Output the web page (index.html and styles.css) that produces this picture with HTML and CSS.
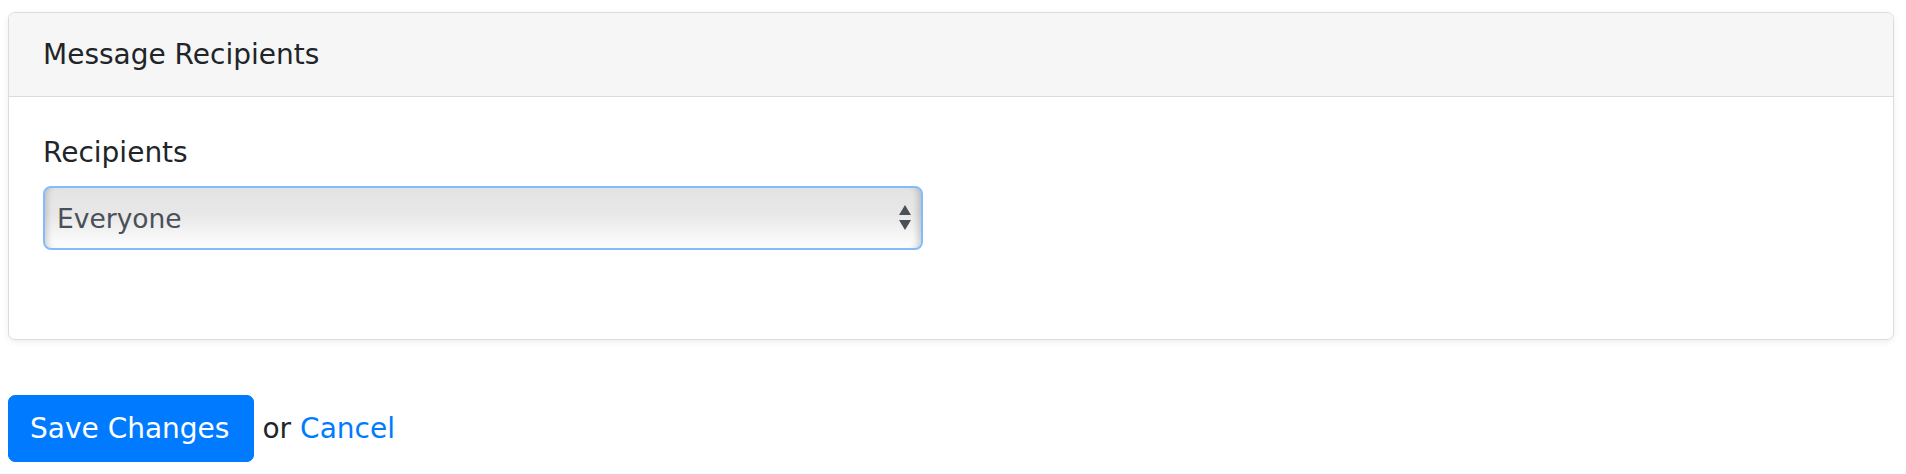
FILE: index.html
```html
<!DOCTYPE html>
<html lang="en">
<head>
<meta charset="utf-8">
<title>Message Recipients</title>
<link rel="stylesheet" href="styles.css">
</head>
<body>
<div class="page">
  <div class="card">
    <div class="card-header">Message Recipients</div>
    <div class="card-body">
      <div class="form-group">
        <label class="form-label" for="recipients">Recipients</label>
        <div class="select-wrap">
          <select id="recipients" class="form-select">
            <option>Everyone</option>
          </select>
          <svg class="select-arrows" width="14" height="28" viewBox="0 0 14 28" aria-hidden="true">
            <path d="M7 1 L13 11 L1 11 Z" fill="#4b5058"/>
            <path d="M1 16 L13 16 L7 26 Z" fill="#4b5058"/>
          </svg>
        </div>
      </div>
    </div>
  </div>
  <div class="actions">
    <button class="btn-primary" type="button">Save Changes</button>
    <span class="or">or</span>
    <a class="cancel" href="#">Cancel</a>
  </div>
</div>
</body>
</html>
```

FILE: styles.css
```css
html, body {
  margin: 0;
  padding: 0;
  background: #ffffff;
}

body {
  font-family: "DejaVu Sans", "Noto Sans", sans-serif;
  font-size: 28px;
  color: #212529;
}

.page {
  padding: 12px 12px 0 8px;
}

.card {
  width: 1886px;
  box-sizing: border-box;
  border: 1px solid #dcdcdc;
  border-radius: 7px;
  background: #ffffff;
  box-shadow: 0 2px 6px rgba(0, 0, 0, 0.07);
}

.card-header {
  height: 83px;
  display: flex;
  align-items: center;
  padding: 0 34px;
  background: #f6f6f6;
  border-bottom: 1px solid #dcdcdc;
  border-radius: 6px 6px 0 0;
  line-height: 1;
}

.card-body {
  padding: 35px 34px 61px;
}

.form-group {
  margin-bottom: 28px;
}

.form-label {
  display: block;
  line-height: 42px;
  margin-bottom: 12px;
}

.select-wrap {
  position: relative;
  width: 880px;
}

.form-select {
  -webkit-appearance: none;
  appearance: none;
  display: block;
  width: 880px;
  height: 64px;
  box-sizing: border-box;
  margin: 0;
  padding: 0 50px 0 12px;
  font-family: inherit;
  font-size: 26.5px;
  color: #495057;
  border: 2px solid #80bdff;
  border-radius: 8px;
  background: linear-gradient(#e3e3e3 0%, #e8e8e8 45%, #f4f4f4 75%, #fdfdfd 100%);
  box-shadow: inset 7px 0 6px -5px rgba(0, 0, 0, 0.18), inset -8px 0 6px -5px rgba(0, 0, 0, 0.18);
  outline: none;
}

.select-arrows {
  position: absolute;
  right: 11px;
  top: 18px;
  pointer-events: none;
}

.actions {
  display: flex;
  align-items: center;
  margin-top: 55px;
  line-height: 1;
}

.btn-primary {
  height: 67px;
  padding: 0 24px 0 21px;
  font-family: inherit;
  font-size: 28px;
  color: #ffffff;
  background: #007bff;
  border: 1px solid #007bff;
  border-radius: 7px;
  cursor: pointer;
}

.or {
  margin-left: 8px;
  color: #212529;
}

.cancel {
  margin-left: 9px;
  color: #007bff;
  text-decoration: none;
}
```
